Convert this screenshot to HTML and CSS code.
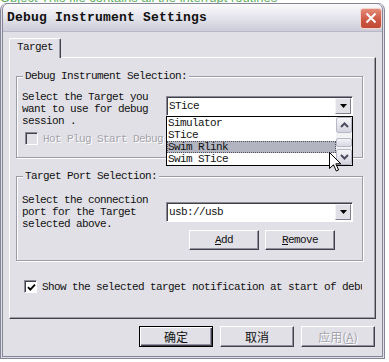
FILE: index.html
```html
<!DOCTYPE html>
<html lang="en">
<head>
    <meta charset="UTF-8">
    <meta name="viewport" content="width=device-width, initial-scale=1.0">
    <title>Debug Instrument Settings</title>
    <link rel="stylesheet" href="styles.css">
</head>
<body>
    <div class="backdrop"><span>Object This file contains all the interrupt routines</span></div>
    <div class="window">
        <div class="titlebar">
            <span class="title">Debug Instrument Settings</span>
            <button class="close-btn" title="Close">
                <svg width="12" height="12" viewBox="0 0 12 12"><path d="M1.5 1.5L10.5 10.5M10.5 1.5L1.5 10.5" stroke="#fff" stroke-width="2" fill="none"/></svg>
            </button>
        </div>
        <div class="client">
            <div class="tabs"><div class="tab">Target</div></div>
            <div class="panel">
                <div class="group group-debug">
                    <span class="legend">Debug Instrument Selection:</span>
                    <div class="group-row">
                        <div class="desc">Select the Target you<br>want to use for debug<br>session .</div>
                        <div class="combo-col combo-col-debug">
                            <div class="combo">
                                <span class="combo-value">STice</span>
                                <span class="combo-btn"><svg width="7" height="4" viewBox="0 0 7 4"><path d="M0 0H7L3.5 4Z" fill="#000"/></svg></span>
                                <div class="dropdown">
                                    <div class="list">
                                        <div class="item">Simulator</div>
                                        <div class="item">STice</div>
                                        <div class="item selected">Swim Rlink</div>
                                        <div class="item">Swim STice</div>
                                    </div>
                                    <div class="scrollbar">
                                        <div class="sb-btn"><svg width="9" height="6" viewBox="0 0 9 6"><path d="M1 5L4.5 1.5L8 5" stroke="#4d4d61" stroke-width="2" fill="none"/></svg></div>
                                        <div class="sb-track"><div class="sb-thumb"></div></div>
                                        <div class="sb-btn"><svg width="9" height="6" viewBox="0 0 9 6"><path d="M1 1L4.5 4.5L8 1" stroke="#4d4d61" stroke-width="2" fill="none"/></svg></div>
                                    </div>
                                </div>
                                <svg class="cursor" width="13" height="20" viewBox="0 0 13 20"><path d="M0.5 0.5V16.5L4.5 12.8L7.3 19L9.6 18L6.8 11.8H11.8Z" fill="#fff" stroke="#000"/></svg>
                            </div>
                        </div>
                    </div>
                    <label class="check disabled"><span class="box"></span>Hot Plug Start Debug</label>
                </div>

                <div class="group group-port">
                    <span class="legend">Target Port Selection:</span>
                    <div class="group-row">
                        <div class="desc">Select the connection<br>port for the Target<br>selected above.</div>
                        <div class="combo-col">
                            <div class="combo">
                                <span class="combo-value">usb://usb</span>
                                <span class="combo-btn"><svg width="7" height="4" viewBox="0 0 7 4"><path d="M0 0H7L3.5 4Z" fill="#000"/></svg></span>
                            </div>
                            <div class="port-buttons">
                                <button class="btn btn-small"><u>A</u>dd</button>
                                <button class="btn btn-small"><u>R</u>emove</button>
                            </div>
                        </div>
                    </div>
                </div>

                <label class="check check-notify"><span class="box checked"><svg width="9" height="9" viewBox="0 0 9 9"><path d="M1 4.2L3.3 6.6L8 1.6" stroke="#000" stroke-width="1.8" fill="none"/></svg></span>Show the selected target notification at start of debug session</label>
            </div>
            <div class="actions">
                <button class="btn btn-cn btn-default">确定</button>
                <button class="btn btn-cn">取消</button>
                <button class="btn btn-cn" disabled>应用(<u>A</u>)</button>
            </div>
        </div>
    </div>
</body>
</html>
```

FILE: styles.css
```css
/* base: classic windows dialog look */
body {
    margin: 0;
    background-color: #ffffff;
    font-family: "Liberation Mono", monospace;
    font-size: 11px;
    line-height: 12px;
    letter-spacing: -0.6px; /* 6px per char, like the system font */
    color: #111111;
}

/* editor text peeking above the dialog */
.backdrop {
    height: 3px;
    overflow: hidden;
    white-space: nowrap;
    font-family: "Liberation Sans", sans-serif;
    font-size: 13px;
    line-height: 14px;
    letter-spacing: 0;
    color: #62b062;
}

.backdrop span {
    display: block;
    margin-top: -9px;
}

/* dialog window */
.window {
    width: 385px;
    height: 356px;
    box-sizing: border-box;
    border: 3px double #858599;
    border-top: 1px solid #858599;
    border-radius: 7px 7px 0 0;
    background-color: #e1e0e6;
    display: flex;
    flex-direction: column;
}

.titlebar {
    flex: none;
    height: 28px;
    display: flex;
    align-items: center;
    justify-content: space-between;
    padding-left: 4px;
    border-radius: 6px 6px 0 0;
    background: linear-gradient(#fbfbfd, #e8e8ef 40%, #cbcbd8);
    box-shadow: inset 0 -1px 0 #b8b8c8;
}

.title {
    font-size: 13px;
    font-weight: bold;
    letter-spacing: 0.2px;
    color: #111111;
}

.close-btn {
    width: 22px;
    height: 21px;
    padding: 0;
    border: 1px solid #f4d4cc;
    border-radius: 3px;
    background: linear-gradient(#e48a78, #cc5642 60%, #c04a38);
    display: flex;
    align-items: center;
    justify-content: center;
}

.client {
    flex: 1;
    padding: 6px 6px 10px;
}

/* tab strip */
.tabs {
    display: flex;
}

.tab {
    position: relative;
    z-index: 1;
    width: 52px;
    height: 20px;
    margin-bottom: -1px;
    box-sizing: border-box;
    padding: 2px 0 0 7px;
    border: 1px solid #ffffff;
    border-right-color: #404048;
    border-bottom: none;
    border-radius: 2px 2px 0 0;
    box-shadow: inset -1px 0 0 #9d9da6;
    background-color: #e1e0e6;
}

.panel {
    height: 262px;
    box-sizing: border-box;
    border: 1px solid #ffffff;
    border-right-color: #404048;
    border-bottom-color: #404048;
    box-shadow: inset -1px -1px 0 #9d9da6;
    display: flex;
    flex-direction: column;
}

/* etched group boxes */
.group {
    position: relative;
    margin: 18px 12px 0 6px;
    padding: 0 9px 0 5px;
    border: 1px solid #9c9ca8;
    box-shadow: inset 1px 1px 0 #ffffff, 1px 1px 0 #ffffff;
}

.group-debug {
    padding-top: 14px;
    padding-bottom: 12px;
}

.group-port {
    padding-top: 17px;
    padding-bottom: 10px;
}

.legend {
    position: absolute;
    top: -7px;
    left: 6px;
    padding: 0 2px;
    background-color: #e1e0e6;
}

.group-row {
    display: flex;
}

.desc {
    width: 144px;
    flex: none;
}

.combo-col {
    flex: 1;
    margin-top: 8px;
}

.combo-col-debug {
    margin-top: 5px;
}

/* combo box */
.combo {
    position: relative;
    height: 20px;
    box-sizing: border-box;
    border: 1px solid;
    border-color: #8a8a96 #ffffff #ffffff #8a8a96;
    box-shadow: inset 1px 1px 0 #404048;
    background-color: #ffffff;
    display: flex;
    align-items: center;
    padding-left: 2px;
}

.combo-value {
    flex: 1;
}

.combo-btn {
    width: 16px;
    height: 16px;
    margin-right: 1px;
    box-sizing: border-box;
    border: 1px solid;
    border-color: #f4f4f8 #808090 #808090 #f4f4f8;
    background-color: #e1e0e6;
    display: flex;
    align-items: center;
    justify-content: center;
}

/* open list under the first combo */
.dropdown {
    position: absolute;
    z-index: 5;
    top: 19px;
    left: -1px;
    width: 187px;
    height: 50px;
    box-sizing: border-box;
    border: 1px solid #000000;
    background-color: #ffffff;
    display: flex;
}

.list {
    flex: 1;
}

.item {
    height: 12px;
    padding-left: 1px;
}

.item.selected {
    background-color: #b2b4bf;
    outline: 1px dotted #505060;
    outline-offset: -1px;
}

.scrollbar {
    width: 16px;
    display: flex;
    flex-direction: column;
}

.sb-btn {
    height: 16px;
    box-sizing: border-box;
    border: 1px solid #b8b8c8;
    border-radius: 2px;
    background: linear-gradient(#f6f6f9, #d4d4de);
    display: flex;
    align-items: center;
    justify-content: center;
}

.sb-track {
    height: 16px;
    background-color: #f2f2f5;
    padding-top: 5px;
    box-sizing: border-box;
}

.sb-thumb {
    height: 9px;
    border: 1px solid #b8b8c8;
    border-radius: 2px;
    background: linear-gradient(#f2f2f6, #d8d8e2);
    box-sizing: border-box;
}

.cursor {
    position: absolute;
    z-index: 6;
    left: 162px;
    top: 55px;
}

/* checkboxes */
.check {
    display: flex;
    align-items: center;
    gap: 5px;
    height: 13px;
    white-space: nowrap;
}

.check.disabled {
    margin: 5px 0 0 3px;
    color: #a4a4ac;
    text-shadow: 1px 1px 0 #ffffff;
}

.check-notify {
    width: 338px;
    overflow: hidden;
    margin: 19px 0 0 14px;
}

.box {
    flex: none;
    width: 13px;
    height: 13px;
    box-sizing: border-box;
    border: 1px solid;
    border-color: #8a8a96 #ffffff #ffffff #8a8a96;
    box-shadow: inset 1px 1px 0 #404048;
    background-color: #e1e0e6;
    display: flex;
    align-items: center;
    justify-content: center;
}

.box.checked {
    background-color: #ffffff;
    padding: 1px 0 0 1px;
}

/* push buttons */
.btn {
    padding: 0;
    border: 1px solid;
    border-color: #ffffff #404048 #404048 #ffffff;
    box-shadow: inset -1px -1px 0 #9090a0;
    background-color: #e1e0e6;
    color: #111111;
    font-family: "Liberation Mono", monospace;
    font-size: 11px;
    letter-spacing: -0.6px;
}

.btn-small {
    width: 70px;
    height: 20px;
}

.port-buttons {
    display: flex;
    gap: 6px;
    margin-top: 8px;
    padding-left: 23px;
}

.actions {
    display: flex;
    justify-content: flex-end;
    gap: 7px;
    margin-top: 7px;
    padding-right: 1px;
}

.btn-cn {
    width: 74px;
    height: 21px;
    font-family: "Noto Sans CJK SC", sans-serif;
    font-size: 12px;
    letter-spacing: 0;
}

.btn-default {
    border-color: #000000;
    box-shadow: inset 1px 1px 0 #ffffff, inset -1px -1px 0 #404048, inset -2px -2px 0 #9090a0;
}

.btn:disabled {
    color: #a4a4ac;
    text-shadow: 1px 1px 0 #ffffff;
}
```
